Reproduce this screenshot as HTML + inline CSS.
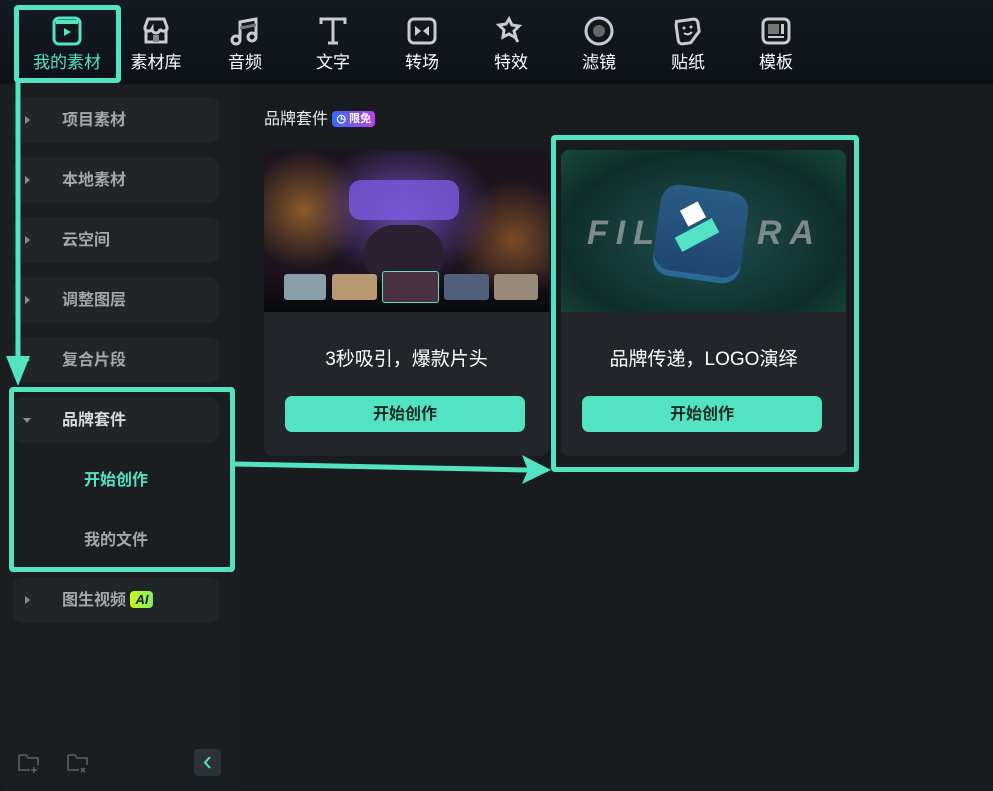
<!DOCTYPE html>
<html><head><meta charset="utf-8"><style>
*{margin:0;padding:0;box-sizing:border-box}
body{width:993px;height:791px;background:#191c1f;font-family:"Liberation Sans","Noto Sans CJK SC",sans-serif;position:relative;overflow:hidden;color:#fff}
.top{position:absolute;left:0;top:0;width:993px;height:84px;background:linear-gradient(#141a21,#0d1218)}
.tab{position:absolute;top:15px;width:80px;text-align:center;font-size:17px;color:#fff;line-height:20px}
.tab svg{display:block;margin:0 auto 6px;width:32px;height:32px}
.side{position:absolute;left:1px;top:84px;width:239px;height:707px;background:#1b1e21;border-radius:0 0 0 8px}
.item{position:absolute;left:13px;width:206px;height:46px;background:#222528;border-radius:10px;font-size:16px;font-weight:bold;color:#a3a6ab}
.item span{position:absolute;left:49px;top:13px;line-height:22px}
.item i{position:absolute;left:12px;top:19px;width:0;height:0;border-left:5px solid #8a8d92;border-top:4px solid transparent;border-bottom:4px solid transparent}
.sub{position:absolute;font-size:16px;font-weight:bold;line-height:22px}
.card{position:absolute;top:150px;width:285px;height:306px;background:#22262b;border-radius:8px;overflow:hidden}
.card .t{position:absolute;top:198px;width:100%;text-align:center;font-size:19px;line-height:24px}
.card .b{position:absolute;left:21px;top:246px;width:240px;height:36px;background:#52e3c2;border-radius:7px;color:#1b2a26;font-weight:bold;font-size:16px;text-align:center;line-height:38px}
.hl{position:absolute;border:5px solid #52e3c2;border-radius:4px}
</style></head><body>
<div class="top"></div>
<div class="tab" style="left:27px;color:#52e3c2"><svg viewBox="0 0 32 32"><rect x="3" y="3" width="26" height="26" rx="5" fill="none" stroke="#52e3c2" stroke-width="3"/><rect x="5" y="5" width="22" height="4" fill="#52e3c2"/><path d="M13 13l7 4-7 4z" fill="#52e3c2"/></svg>我的素材</div>
<div class="tab" style="left:116px"><svg viewBox="0 0 32 32"><path d="M5 12l3-8h16l3 8v2a4 4 0 0 1-7 0a4 4 0 0 1-8 0a4 4 0 0 1-7 0zM6 16v11h20V16" fill="none" stroke="#c9cbd0" stroke-width="3"/><rect x="13" y="20" width="6" height="7" fill="#888"/></svg>素材库</div>
<div class="tab" style="left:205px"><svg viewBox="0 0 32 32"><path d="M11 25V7l16-3v17" fill="none" stroke="#c9cbd0" stroke-width="3"/><circle cx="7" cy="25" r="4" fill="none" stroke="#c9cbd0" stroke-width="3"/><circle cx="23" cy="22" r="4" fill="none" stroke="#c9cbd0" stroke-width="3"/><path d="M11 13l16-3" stroke="#777" stroke-width="3"/></svg>音频</div>
<div class="tab" style="left:293px"><svg viewBox="0 0 32 32"><path d="M4 9V4h24v5M16 4v24M11 28h10" fill="none" stroke="#c9cbd0" stroke-width="3"/></svg>文字</div>
<div class="tab" style="left:382px"><svg viewBox="0 0 32 32"><rect x="3" y="4" width="26" height="24" rx="5" fill="none" stroke="#c9cbd0" stroke-width="3"/><path d="M9 11l6 5-6 5zM23 11l-6 5 6 5z" fill="#c9cbd0"/></svg>转场</div>
<div class="tab" style="left:471px"><svg viewBox="0 0 32 32"><path d="M14 4l3 6 7 1-5 5 2 7-7-4-6 3 1-7-5-5 7-1z" fill="none" stroke="#c9cbd0" stroke-width="3"/><path d="M20 22l3 5" stroke="#c9cbd0" stroke-width="3"/></svg>特效</div>
<div class="tab" style="left:559px"><svg viewBox="0 0 32 32"><circle cx="16" cy="16" r="13" fill="none" stroke="#c9cbd0" stroke-width="3"/><circle cx="16" cy="16" r="6" fill="#666"/></svg>滤镜</div>
<div class="tab" style="left:648px"><svg viewBox="0 0 32 32"><path d="M6 5h17a4 4 0 0 1 4 4v9l-10 10H9a4 4 0 0 1-4-4V9z" fill="none" stroke="#c9cbd0" stroke-width="3" transform="rotate(-8 16 16)"/><circle cx="12" cy="13" r="1.5" fill="#c9cbd0"/><circle cx="19" cy="12" r="1.5" fill="#c9cbd0"/><path d="M12 18q4 3 8-1" fill="none" stroke="#c9cbd0" stroke-width="2"/></svg>贴纸</div>
<div class="tab" style="left:736px"><svg viewBox="0 0 32 32"><rect x="3" y="4" width="26" height="24" rx="5" fill="none" stroke="#c9cbd0" stroke-width="3"/><rect x="8" y="9" width="11" height="10" fill="#777"/><rect x="21" y="9" width="3" height="10" fill="#c9cbd0"/><rect x="8" y="21" width="16" height="2" fill="#c9cbd0"/></svg>模板</div>

<div class="side"></div>
<div class="item" style="top:97px"><i></i><span>项目素材</span></div>
<div class="item" style="top:157px"><i></i><span>本地素材</span></div>
<div class="item" style="top:217px"><i></i><span>云空间</span></div>
<div class="item" style="top:277px"><i></i><span>调整图层</span></div>
<div class="item" style="top:337px"><i></i><span>复合片段</span></div>
<div class="item" style="top:397px"><i style="border-left:4px solid transparent;border-right:4px solid transparent;border-top:5px solid #8a8d92;border-bottom:0;top:21px;left:10px"></i><span style="color:#d8dadd">品牌套件</span></div>
<div class="sub" style="left:84px;top:470px;color:#52e3c2">开始创作</div>
<div class="sub" style="left:84px;top:530px;color:#a3a6ab">我的文件</div>
<div class="item" style="top:577px"><i></i><span>图生视频 <b style="display:inline-block;background:linear-gradient(90deg,#c9f51a,#7ef06a);color:#1a1a1a;font-style:italic;font-size:13px;padding:0 5px;border-radius:4px;line-height:17px;vertical-align:1px">AI</b></span></div>
<svg style="position:absolute;left:17px;top:752px" width="24" height="22"><path d="M2 3h7l2 3h10v7M2 3v15h11" fill="none" stroke="#5c6066" stroke-width="1.6"/><path d="M17 15v6M14 18h6" stroke="#5c6066" stroke-width="1.6"/></svg>
<svg style="position:absolute;left:66px;top:752px" width="24" height="22"><path d="M2 3h7l2 3h10v7M2 3v15h11" fill="none" stroke="#5c6066" stroke-width="1.6"/><path d="M15 16l4 4M19 16l-4 4" stroke="#5c6066" stroke-width="1.6"/></svg>
<div style="position:absolute;left:194px;top:749px;width:27px;height:27px;background:#2c3338;border-radius:4px"><svg width="27" height="27"><path d="M16 8l-5 5.5 5 5.5" fill="none" stroke="#52e3c2" stroke-width="2"/></svg></div>

<div style="position:absolute;left:264px;top:109px;font-size:16px;color:#e8e8e8;line-height:22px">品牌套件 <span style="display:inline-block;background:linear-gradient(90deg,#2f6bff,#c040e0);color:#fff;font-size:11px;font-weight:bold;padding:0 4px;border-radius:4px;line-height:16px;vertical-align:2px">◷ 限免</span></div>

<div class="card" style="left:264px">
<div style="position:absolute;left:0;top:0;width:285px;height:162px;background:radial-gradient(ellipse 90px 70px at 140px 60px,#6a4ab0,transparent),radial-gradient(circle at 40px 60px,#8a5a2a,transparent 60px),radial-gradient(circle at 250px 90px,#7a4a28,transparent 60px),#1d1420"></div>
<div style="position:absolute;left:85px;top:30px;width:110px;height:40px;background:#7a5ae0;border-radius:12px;opacity:.8"></div>
<div style="position:absolute;left:100px;top:75px;width:80px;height:60px;background:#2a2030;border-radius:30px"></div>
<div style="position:absolute;left:0;top:120px;width:285px;height:42px;background:linear-gradient(transparent,#07090c)"></div>
<div style="position:absolute;left:20px;top:124px;width:42px;height:26px;background:#8aa0a8;border-radius:3px"></div>
<div style="position:absolute;left:68px;top:124px;width:45px;height:26px;background:#b89870;border-radius:3px"></div>
<div style="position:absolute;left:118px;top:121px;width:57px;height:32px;background:#4a3040;border:1px solid #52e3c2;border-radius:3px"></div>
<div style="position:absolute;left:180px;top:124px;width:45px;height:26px;background:#50607a;border-radius:3px"></div>
<div style="position:absolute;left:230px;top:124px;width:44px;height:26px;background:#9a8a7a;border-radius:3px"></div>
<div class="t">3秒吸引，爆款片头</div><div class="b">开始创作</div></div>

<div class="card" style="left:561px">
<div style="position:absolute;left:0;top:0;width:285px;height:162px;background:radial-gradient(ellipse at 50% 55%,#1e5050,#0f2e2a 70%,#164a3a)"></div>
<div style="position:absolute;left:26px;top:64px;font-size:34px;font-weight:bold;font-style:italic;color:#7d8a88;letter-spacing:8px">FIL</div>
<div style="position:absolute;left:196px;top:64px;font-size:34px;font-weight:bold;font-style:italic;color:#7d8a88;letter-spacing:8px">RA</div>
<div style="position:absolute;left:96px;top:38px;width:88px;height:86px;background:linear-gradient(#2a5c84,#1e4670);border-radius:18px;transform:rotate(8deg);box-shadow:0 6px 0 #2a6896"></div>
<div style="position:absolute;left:122px;top:55px;width:20px;height:18px;background:#fff;transform:rotate(-28deg)"></div>
<div style="position:absolute;left:115px;top:77px;width:42px;height:16px;background:#52e3c2;transform:rotate(-28deg)"></div>
<div class="t">品牌传递，LOGO演绎</div><div class="b">开始创作</div></div>

<div class="hl" style="left:14px;top:5px;width:107px;height:78px"></div>
<div class="hl" style="left:9px;top:387px;width:226px;height:185px"></div>
<div class="hl" style="left:551px;top:135px;width:308px;height:337px"></div>
<svg style="position:absolute;left:0;top:0" width="993" height="791">
<path d="M18 82V362" stroke="#52e3c2" stroke-width="5"/>
<path d="M6 356h24l-12 30z" fill="#52e3c2"/>
<path d="M234 464L528 470" stroke="#52e3c2" stroke-width="5"/>
<path d="M522 455l29 15-29 14 6-14z" fill="#52e3c2"/>
</svg>
</body></html>
